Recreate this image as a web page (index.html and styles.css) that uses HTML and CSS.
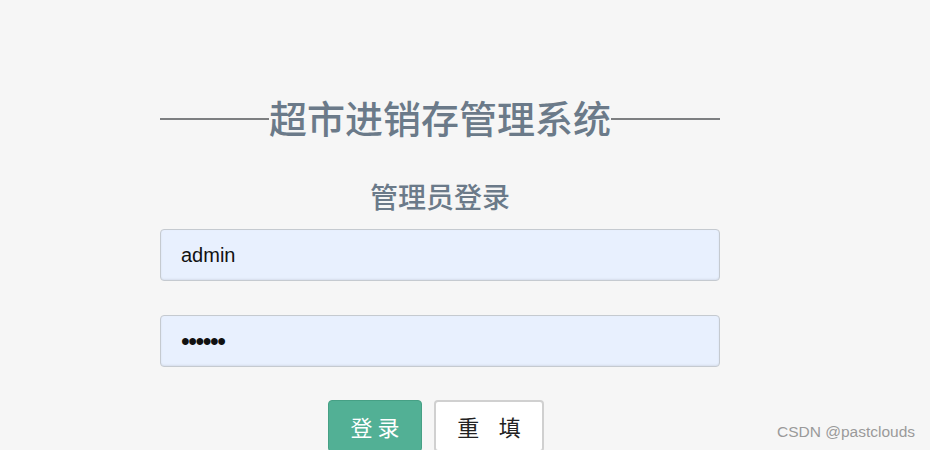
FILE: index.html
```html
<!DOCTYPE html>
<html lang="zh">
<head>
<meta charset="utf-8">
<link rel="stylesheet" href="styles.css">
</head>
<body>
<div class="page">
  <div class="panel">
    <div class="title-row">
      <span class="rule"></span>
      <h1 class="title">超市进销存管理系统</h1>
      <span class="rule"></span>
    </div>
    <h2 class="subtitle">管理员登录</h2>
    <div class="field">admin</div>
    <div class="field pw">••••••</div>
    <div class="actions">
      <button class="btn btn-primary">登 录</button>
      <button class="btn btn-default">重&nbsp;&nbsp;&nbsp;&nbsp;填</button>
    </div>
  </div>
</div>
<div class="watermark">CSDN @pastclouds</div>
</body>
</html>
```
FILE: styles.css
```css
html, body {
  margin: 0;
  padding: 0;
  background: #f6f6f6;
  height: 100%;
  overflow: hidden;
}
body {
  font-family: "Noto Sans CJK SC", "Liberation Sans", sans-serif;
  position: relative;
}
.page {
  padding-top: 94px;
  padding-left: 160px;
}
.panel {
  width: 560px;
  display: flex;
  flex-direction: column;
  align-items: stretch;
}
.title-row {
  display: flex;
  align-items: center;
  height: 46px;
}
.rule {
  flex: 1;
  height: 2px;
  background: #7d7f81;
  margin-top: 4px;
}
.title {
  margin: 0;
  font-size: 38px;
  font-weight: 500;
  color: #6b7a89;
  line-height: 46px;
  letter-spacing: 0;
}
.subtitle {
  margin: 38px 0 0;
  font-size: 28px;
  font-weight: 500;
  color: #6b7a89;
  text-align: center;
  line-height: 36px;
}
.field {
  margin-top: 15px;
  height: 50px;
  border: 1px solid #c5cad0;
  border-radius: 4px;
  background: #e8f0fe;
  box-shadow: inset 0 -1px 2px rgba(0,0,0,0.08);
  font-family: "Liberation Sans", sans-serif;
  font-size: 20px;
  color: #111;
  display: flex;
  align-items: center;
  padding-left: 20px;
}
.field.pw {
  margin-top: 34px;
  font-size: 25px;
  letter-spacing: -1.5px;
}
.actions {
  margin-top: 33px;
  display: flex;
  justify-content: center;
  gap: 12px;
  padding-right: 8px;
}
.btn {
  height: 52px;
  border-radius: 4px;
  font-family: "Noto Sans CJK SC", sans-serif;
  font-size: 22px;
  padding: 0;
  cursor: pointer;
}
.btn-primary {
  width: 94px;
  background: #52b095;
  border: 1px solid #46a085;
  color: #fff;
}
.btn-default {
  width: 110px;
  background: #fff;
  border: 2px solid #d0d0d0;
  color: #222;
}
.watermark {
  position: absolute;
  right: 15px;
  top: 423px;
  font-family: "Liberation Sans", sans-serif;
  font-size: 15.5px;
  color: #9a9a9a;
}
```
